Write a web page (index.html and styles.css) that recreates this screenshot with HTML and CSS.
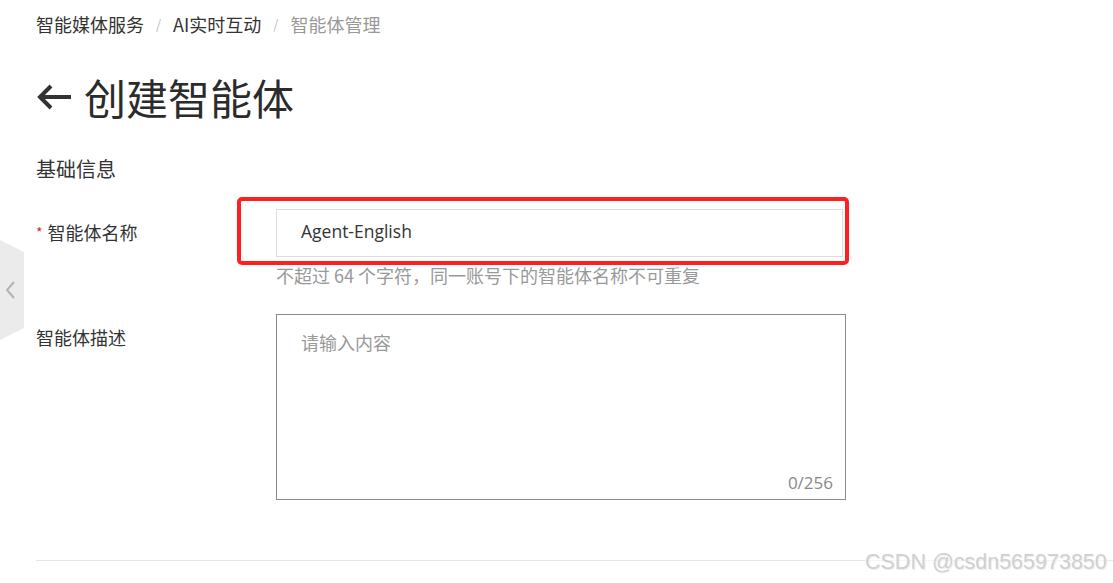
FILE: index.html
```html
<!DOCTYPE html>
<html lang="zh-CN">
<head>
<meta charset="utf-8">
<title>创建智能体</title>
<link rel="stylesheet" href="styles.css">
</head>
<body>
<div class="side-tab">
  <svg class="side-chevron" viewBox="0 0 12 20" width="12" height="20"><path d="M10 2 L3 10 L10 18" fill="none" stroke="#b3b3b3" stroke-width="2"/></svg>
</div>
<div class="page">
  <nav class="crumbs">
    <span class="crumb">智能媒体服务</span>
    <span class="sep">/</span>
    <span class="crumb">AI实时互动</span>
    <span class="sep">/</span>
    <span class="crumb current">智能体管理</span>
  </nav>
  <h1 class="title">
    <svg class="back" viewBox="0 0 36 28" width="36" height="28"><path d="M35 14 H5 M15 3 L4 14 L15 25" fill="none" stroke="#333" stroke-width="4"/></svg>
    <span>创建智能体</span>
  </h1>
  <h2 class="section">基础信息</h2>
  <div class="row">
    <label class="label"><span class="req">*</span>智能体名称</label>
    <div class="field">
      <div class="input-wrap">
        <div class="input">Agent-English</div>
        <div class="highlight"></div>
      </div>
      <div class="help">不超过 64 个字符，同一账号下的智能体名称不可重复</div>
    </div>
  </div>
  <div class="row row2">
    <label class="label">智能体描述</label>
    <div class="field">
      <div class="textarea">
        <span class="placeholder">请输入内容</span>
        <span class="count">0/256</span>
      </div>
    </div>
  </div>
  <div class="divider"></div>
</div>
<div class="watermark">CSDN @csdn565973850</div>
</body>
</html>
```

FILE: styles.css
```css
* { box-sizing: border-box; }
html, body {
  margin: 0;
  padding: 0;
  background: #fff;
  width: 1113px;
  height: 583px;
  overflow: hidden;
}
body {
  font-family: "Open Sans", "Noto Sans CJK SC", sans-serif;
  color: #333;
  position: relative;
}
.page {
  padding: 12px 0 0 36px;
}
.crumbs {
  display: flex;
  align-items: center;
  font-size: 18px;
  line-height: 24px;
  height: 24px;
  font-family: "Noto Sans CJK SC", sans-serif;
}
.crumb { color: #333; }
.crumb.current { color: #999; }
.sep {
  color: #bbb;
  font-size: 13px;
  margin: 0 12px;
}
.title {
  margin: 33px 0 0 0;
  display: flex;
  align-items: center;
  gap: 12px;
  font-size: 42px;
  line-height: 56px;
  height: 56px;
  font-weight: 400;
  color: #2b2b2b;
  font-family: "Noto Sans CJK SC", sans-serif;
}
.back { display: block; }
.section {
  margin: 30px 0 0 0;
  font-size: 20px;
  line-height: 28px;
  font-weight: 400;
  color: #333;
  font-family: "Noto Sans CJK SC", sans-serif;
}
.row {
  display: flex;
  margin-top: 26px;
}
.row2 { margin-top: 27px; }
.label {
  width: 240px;
  flex: none;
  font-size: 18px;
  line-height: 46px;
  color: #333;
  font-family: "Noto Sans CJK SC", sans-serif;
}
.req {
  color: #e0261f;
  font-size: 14px;
  margin-right: 5px;
  vertical-align: 2px;
}
.field { width: 570px; }
.input-wrap { position: relative; }
.input {
  height: 48px;
  width: 567px;
  border: 1px solid #dcdcdc;
  padding-left: 24px;
  font-size: 17.5px;
  line-height: 43px;
  color: #333;
}
.highlight {
  position: absolute;
  left: -39px;
  top: -12px;
  width: 612px;
  height: 68px;
  border: 4px solid #ff1f1f;
  border-radius: 5px;
}
.help {
  margin-top: 6px;
  font-size: 18px;
  line-height: 24px;
  color: #999;
  font-family: "Noto Sans CJK SC", sans-serif;
}
.textarea {
  position: relative;
  height: 186px;
  width: 570px;
  border: 1px solid #8a8a8a;
  padding: 15px 24px;
}
.placeholder {
  font-size: 18px;
  line-height: 24px;
  color: #999;
  font-family: "Noto Sans CJK SC", sans-serif;
}
.count {
  position: absolute;
  right: 12px;
  bottom: 4px;
  font-size: 17px;
  line-height: 24px;
  color: #888;
}
.divider {
  margin-top: 60px;
  height: 1px;
  background: #e6e6e6;
}
.side-tab {
  position: absolute;
  left: 0;
  top: 240px;
  width: 24px;
  height: 100px;
  background: #ebebeb;
  clip-path: polygon(0 0, 100% 12%, 100% 88%, 0 100%);
  display: flex;
  align-items: center;
  padding-left: 4px;
}
.side-chevron { display: block; }
.watermark {
  position: absolute;
  left: 865px;
  top: 549px;
  font-family: "Liberation Sans", sans-serif;
  font-size: 21.5px;
  line-height: 26px;
  color: #d0d0d0;
  text-shadow: 1px 1px 0 #eee;
  background: rgba(255,255,255,0.6);
}
```
